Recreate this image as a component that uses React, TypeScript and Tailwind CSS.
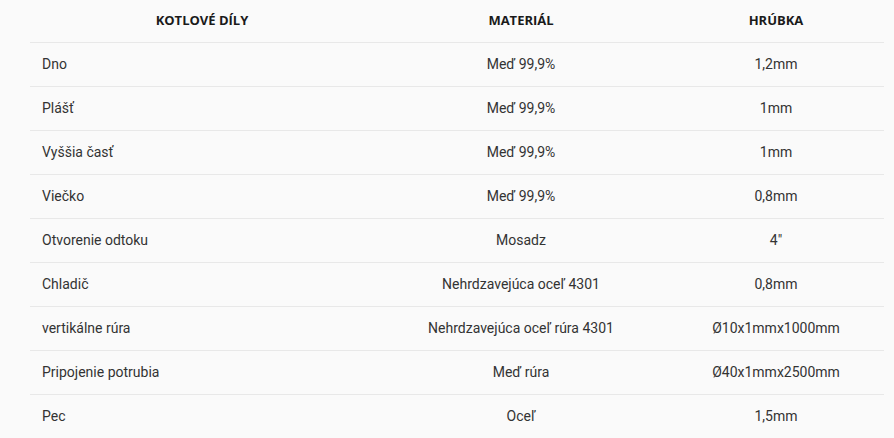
import React from "react";

const rows: [string, string, string][] = [
  ["Dno", "Meď 99,9%", "1,2mm"],
  ["Plášť", "Meď 99,9%", "1mm"],
  ["Vyššia časť", "Meď 99,9%", "1mm"],
  ["Viečko", "Meď 99,9%", "0,8mm"],
  ["Otvorenie odtoku", "Mosadz", "4\""],
  ["Chladič", "Nehrdzavejúca oceľ 4301", "0,8mm"],
  ["vertikálne rúra", "Nehrdzavejúca oceľ rúra 4301", "Ø10x1mmx1000mm"],
  ["Pripojenie potrubia", "Meď rúra", "Ø40x1mmx2500mm"],
  ["Pec", "Oceľ", "1,5mm"],
];

export default function App() {
  return (
    <div className="w-[894px] h-[438px] bg-[#fafafa] overflow-hidden">
      <div className="ml-[30px] w-[854px]">
        <div className="grid grid-cols-[344px_294px_216px] h-[43px] items-center border-b border-[#e8e8e8] text-[13px] font-bold text-[#1a1a1a] uppercase" style={{ fontFamily: '"Open Sans", sans-serif' }}>
          <div className="text-center">Kotlové díly</div>
          <div className="text-center">Materiál</div>
          <div className="text-center">Hrúbka</div>
        </div>
        {rows.map((r, i) => (
          <div key={i} className="grid grid-cols-[344px_294px_216px] h-[44px] items-center border-b border-[#e8e8e8] text-[14px] text-[#333]" style={{ fontFamily: "Roboto, sans-serif" }}>
            <div className="pl-[12px]">{r[0]}</div>
            <div className="text-center">{r[1]}</div>
            <div className="text-center">{r[2]}</div>
          </div>
        ))}
      </div>
    </div>
  );
}
